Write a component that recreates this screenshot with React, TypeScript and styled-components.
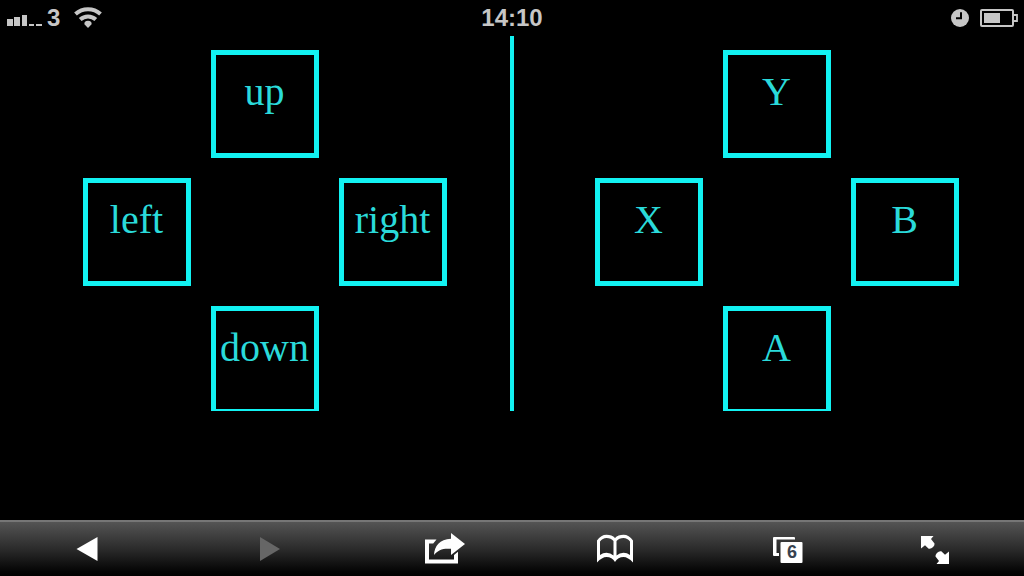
import React from 'react';
import styled, { createGlobalStyle } from 'styled-components';

const CYAN = '#12f2f2';
const SILVER = '#c6c6c6';

const GlobalStyle = createGlobalStyle`
  * { box-sizing: border-box; }
  body { margin: 0; background: #000; }
`;

const Screen = styled.div`
  display: flex;
  flex-direction: column;
  min-height: 100vh;
  background: #000;
`;

const StatusBar = styled.header`
  display: grid;
  grid-template-columns: 1fr auto 1fr;
  align-items: center;
  height: 36px;
  padding: 0 6px;
  color: ${SILVER};
  font: bold 24px/36px 'Liberation Sans', Arial, sans-serif;
`;

const StatusGroup = styled.div<{ $align: 'start' | 'end'; $gap: number }>`
  display: flex;
  align-items: center;
  justify-content: ${(p) => p.$align};
  gap: ${(p) => p.$gap}px;
  svg { display: block; }
`;

const Network = styled.div`
  display: flex;
  align-items: center;
  gap: 5px;
`;

const Controller = styled.main`
  display: grid;
  grid-template-columns: 1fr 4px 1fr;
  height: 375px;
  overflow: hidden;
`;

const Divider = styled.div`
  background: ${CYAN};
`;

const Pad = styled.div<{ $side: 'left' | 'right' }>`
  display: grid;
  grid-template-columns: repeat(3, 108px);
  grid-template-rows: repeat(3, 108px);
  gap: 20px;
  justify-content: center;
  padding-top: 14px;
  padding-left: ${(p) => (p.$side === 'left' ? 20 : 16)}px;
`;

const PadKey = styled.button<{ $row: number; $col: number }>`
  grid-row: ${(p) => p.$row};
  grid-column: ${(p) => p.$col};
  display: flex;
  align-items: flex-start;
  justify-content: center;
  margin: 0;
  padding: 14px 1px 0 0;
  border: 5px solid ${CYAN};
  border-radius: 0;
  background: #000;
  color: #2adada;
  font: 40px/46px 'Liberation Serif', 'Times New Roman', serif;
  white-space: nowrap;
`;

const Toolbar = styled.nav`
  display: grid;
  grid-template-columns: 174fr 192fr 158fr 182fr 164fr 130fr;
  height: 56px;
  margin-top: auto;
  padding-right: 24px;
  border-top: 2px solid #767676;
  background: linear-gradient(#545454, #2b2b2b 50%, #040404 92%, #000);
`;

const ToolButton = styled.button`
  display: flex;
  align-items: center;
  justify-content: center;
  margin: 0;
  padding: 0;
  border: 0;
  background: none;
  color: #fff;
  &:disabled { color: #666; }
  svg { display: block; }
`;

const TabStack = styled.span`
  display: grid;
  width: 30px;
  height: 28px;
  > * { grid-area: 1 / 1; }
`;

const TabCount = styled.span`
  z-index: 1;
  justify-self: end;
  align-self: end;
  width: 22px;
  height: 21px;
  color: #37424f;
  font: bold 18px/21px 'Liberation Sans', Arial, sans-serif;
  text-align: center;
`;

type KeyDef = { label: string; row: number; col: number };

const directions: KeyDef[] = [
  { label: 'up', row: 1, col: 2 },
  { label: 'left', row: 2, col: 1 },
  { label: 'right', row: 2, col: 3 },
  { label: 'down', row: 3, col: 2 },
];

const actions: KeyDef[] = [
  { label: 'Y', row: 1, col: 2 },
  { label: 'X', row: 2, col: 1 },
  { label: 'B', row: 2, col: 3 },
  { label: 'A', row: 3, col: 2 },
];

const SignalIcon = () => (
  <svg width="36" height="20" viewBox="0 0 36 20" fill={SILVER} aria-hidden="true">
    <rect x="1" y="11" width="6" height="7" />
    <rect x="8" y="9" width="6" height="9" />
    <rect x="16" y="7" width="5" height="11" />
    <rect x="23" y="16" width="5" height="2" />
    <rect x="30" y="16" width="6" height="2" />
  </svg>
);

const WifiIcon = () => (
  <svg width="28" height="22" viewBox="0 0 28 22" fill="none" stroke={SILVER} aria-hidden="true">
    <path d="M1.500 7a18.500 18.500 0 0 1 25 0" strokeWidth="4" />
    <path d="M6.200 12.500a11.500 11.500 0 0 1 15.600 0" strokeWidth="4" />
    <path d="M14 21l-3.600-3.800q-.4-3.200 3.600-3.400 4 .2 3.600 3.400z" fill={SILVER} stroke="none" />
  </svg>
);

const ClockIcon = () => (
  <svg width="18" height="18" viewBox="0 0 18 18" aria-hidden="true">
    <circle cx="9" cy="9" r="9" fill={SILVER} />
    <path d="M10 3.200v6.100H5" fill="none" stroke="#000" strokeWidth="2" />
  </svg>
);

const BatteryIcon = () => (
  <svg width="38" height="18" viewBox="0 0 38 18" aria-hidden="true">
    <rect x="1" y="1" width="32" height="16" rx="1" fill="none" stroke={SILVER} strokeWidth="2" />
    <rect x="4" y="4" width="16" height="10" fill={SILVER} />
    <path d="M34 6h3v6h-3" fill="none" stroke={SILVER} strokeWidth="1.800" />
  </svg>
);

const BackIcon = () => (
  <svg width="22" height="24" viewBox="0 0 22 24" fill="currentColor" aria-hidden="true">
    <path d="M21.500 0v24L.5 12z" />
  </svg>
);

const ForwardIcon = () => (
  <svg width="20" height="24" viewBox="0 0 20 24" fill="currentColor" aria-hidden="true">
    <path d="M0 0v24l20-12z" />
  </svg>
);

const ShareIcon = () => (
  <svg width="40" height="32" viewBox="0 0 40 32" fill="currentColor" aria-hidden="true">
    <path d="M0 6.500h11.500L8.200 10.500H4V26.500h25v-4.500l4-3.300V30.500H0z" />
    <path d="M26 0l14 11L26 22v-6.200c-8-.7-13 1-17 6.200C9.500 13 14.500 6.500 26 5.800z" />
  </svg>
);

const BookIcon = () => (
  <svg width="38" height="30" viewBox="0 0 38 30" fill="currentColor" fillRule="evenodd" aria-hidden="true">
    <path d="M1 6.500Q5 .8 10.500.8 16 .8 19 4 22 .8 27.500.8 33 .8 37 6.500V28.500Q32 23 27.500 23 22 23 19 28 16 23 10.500 23 6 23 1 28.500zM4 7.500V21Q7 18.700 10.500 18.700 14.500 18.700 17.500 21.500V7Q15 4 10.500 4 6.500 4 4 7.500zM20.500 7V21.500Q23.500 18.700 27.500 18.700 31 18.700 34 21V7.500Q31.500 4 27.500 4 23 4 20.500 7z" />
  </svg>
);

const TabsIcon = () => (
  <svg width="30" height="28" viewBox="0 0 30 28" aria-hidden="true">
    <path d="M22 4.500V3q0-1-1-1H1Q0 2 0 3v17q0 1 1 1h5v-3H3.500V4.500z" fill="#fff" />
    <rect x="7.500" y="7" width="22" height="21" rx="1" fill="#fff" />
  </svg>
);

const ExpandIcon = () => (
  <svg width="28" height="30" viewBox="0 0 28 30" fill="currentColor" aria-hidden="true">
    <path d="M0 2h12.500L10 5l3.500 4.500q.4 1.500-1.400 3.600-2.300 2.200-4.400 1.600L4 11.200 0 14.500z" />
    <path d="M28 30H15.500l2.500-3-3.500-4.500q-.4-1.500 1.400-3.600 2.300-2.200 4.400-1.600l3.700 3.500 4-3.300z" />
  </svg>
);

const renderKeys = (keys: KeyDef[]) =>
  keys.map((k) => (
    <PadKey key={k.label} type="button" $row={k.row} $col={k.col}>
      {k.label}
    </PadKey>
  ));

export default function App() {
  return (
    <Screen>
      <GlobalStyle />
      <StatusBar>
        <StatusGroup $align="start" $gap={14}>
          <Network>
            <SignalIcon />
            <span>3</span>
          </Network>
          <WifiIcon />
        </StatusGroup>
        <time>14:10</time>
        <StatusGroup $align="end" $gap={11}>
          <ClockIcon />
          <BatteryIcon />
        </StatusGroup>
      </StatusBar>
      <Controller>
        <Pad $side="left">{renderKeys(directions)}</Pad>
        <Divider />
        <Pad $side="right">{renderKeys(actions)}</Pad>
      </Controller>
      <Toolbar aria-label="Browser">
        <ToolButton type="button" aria-label="Back"><BackIcon /></ToolButton>
        <ToolButton type="button" aria-label="Forward" disabled><ForwardIcon /></ToolButton>
        <ToolButton type="button" aria-label="Share"><ShareIcon /></ToolButton>
        <ToolButton type="button" aria-label="Bookmarks"><BookIcon /></ToolButton>
        <ToolButton type="button" aria-label="Tabs">
          <TabStack>
            <TabsIcon />
            <TabCount>6</TabCount>
          </TabStack>
        </ToolButton>
        <ToolButton type="button" aria-label="Full screen"><ExpandIcon /></ToolButton>
      </Toolbar>
    </Screen>
  );
}
